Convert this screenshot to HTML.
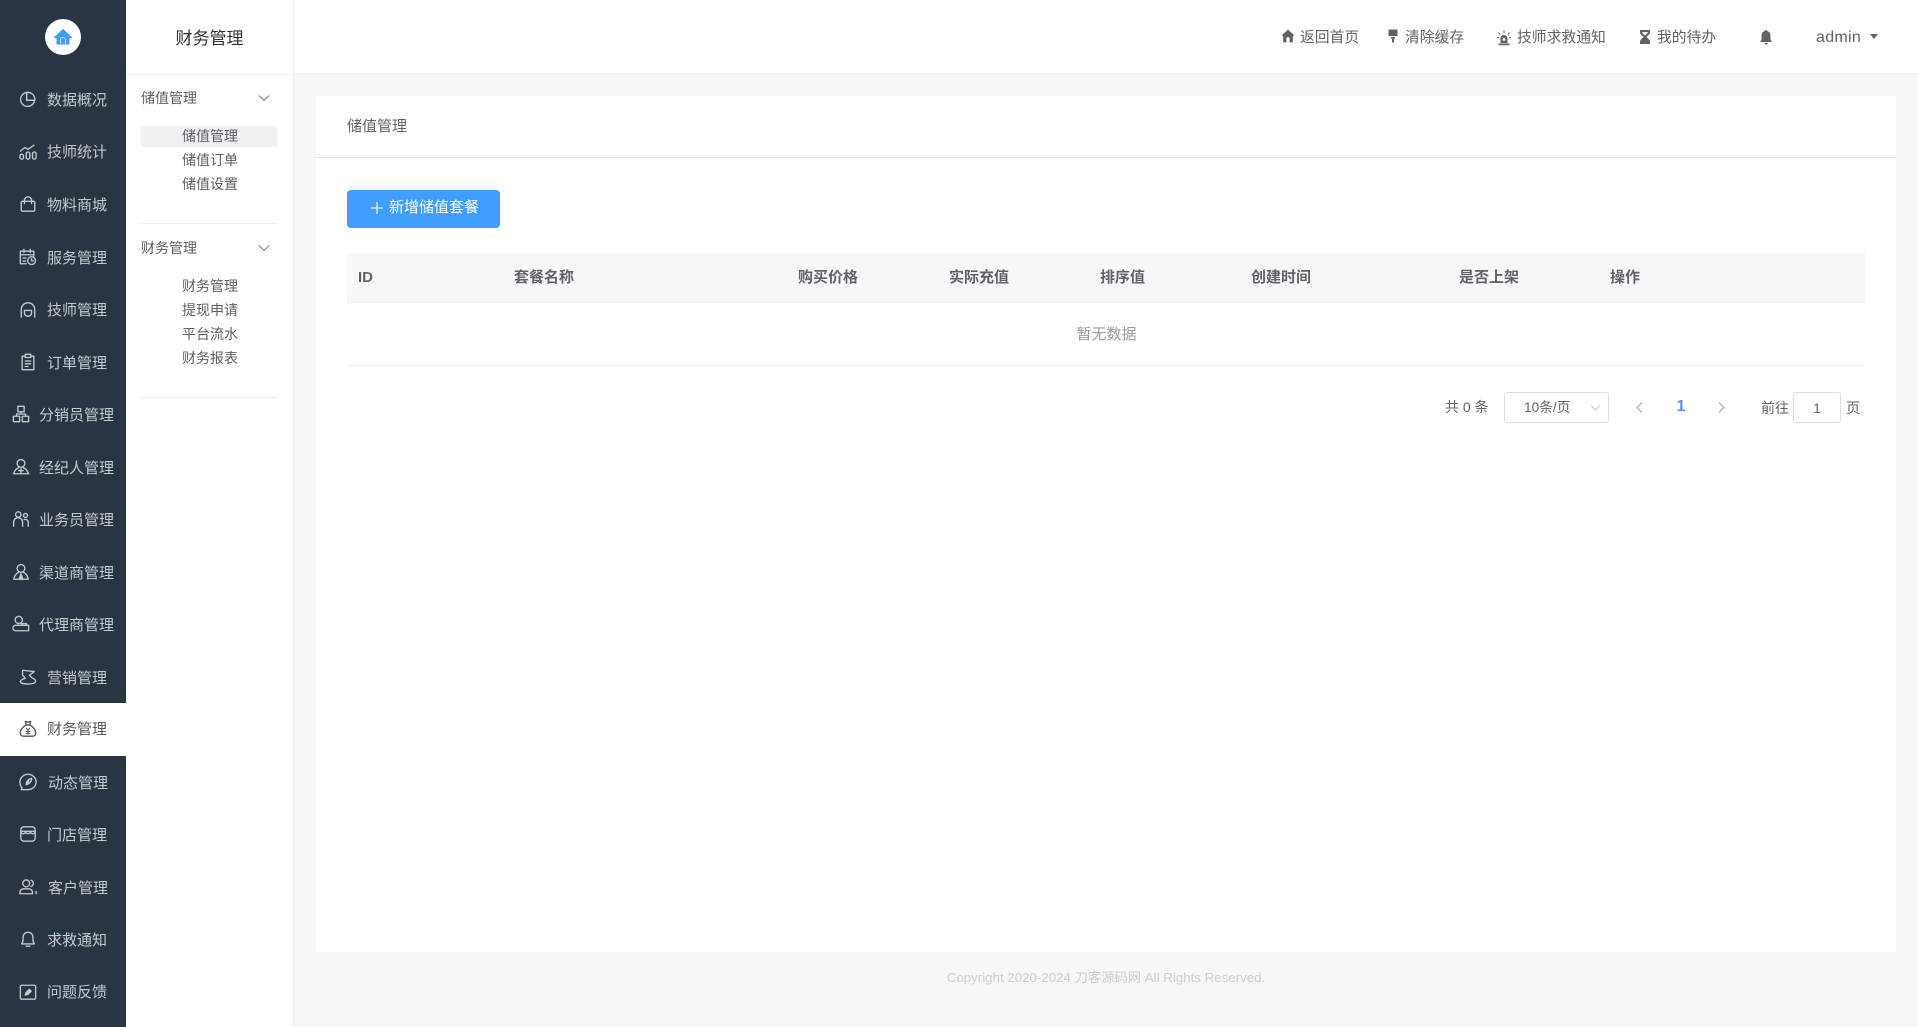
<!DOCTYPE html>
<html lang="zh-CN">
<head>
<meta charset="utf-8">
<title>储值管理</title>
<style>
*{box-sizing:border-box;margin:0;padding:0}
html,body{width:1918px;height:1027px;overflow:hidden;background:#f6f7f9;font-family:"Liberation Sans","Noto Sans CJK SC",sans-serif;color:#606266}
.a{position:absolute;white-space:nowrap}
.t{position:absolute;white-space:nowrap;line-height:20px;transform:translateY(-50%)}
.c{position:absolute;white-space:nowrap;line-height:20px;transform:translate(-50%,-50%)}
#side{position:absolute;left:0;top:0;width:126px;height:1027px;background:#2a3543}
#side .t{font-size:15px;color:#c4cad0;margin-top:1px}
#side svg{position:absolute;width:18px;height:18px;fill:none;stroke:#c4cad0;stroke-width:1.500;stroke-linecap:round;stroke-linejoin:round;transform:translate(-50%,-50%)}
#active{position:absolute;left:0;top:703px;width:126px;height:53px;background:#fff}
#sub{position:absolute;left:126px;top:0;width:168px;height:1027px;background:#fff;border-right:1px solid #eceef1}
#top{position:absolute;left:294px;top:0;width:1624px;height:74px;background:#fff;border-bottom:1px solid #f0f1f4}
.s{font-size:14px;color:#5a5e66}
.h{font-size:15px;color:#5f6368}
.th{font-size:15px;font-weight:700;color:#5f6368}
.p{font-size:14px;color:#606266}
.line{position:absolute;background:#ebedf0;height:1px}
#card{position:absolute;left:316px;top:96px;width:1580px;height:856px;background:#fff}
svg.ic{position:absolute;transform:translate(-50%,-50%);fill:#5f6368}
</style>
</head>
<body>
<div id="side">
  <div class="a" style="left:45px;top:19px;width:36px;height:36px;border-radius:50%;background:#fff"></div>
  <svg style="left:63px;top:37px;width:20px;height:20px" viewBox="0 0 20 20"><path d="M10 2.500 1.500 10.500H4V17h12v-6.500h2.500z" fill="#409eff" stroke="#409eff" stroke-width="1"/><path d="M7.500 16v-3a2.500 2.500 0 0 1 5 0v3" stroke="#cfe5ff" stroke-width="1"/></svg>
  <div id="active"></div>

  <svg style="left:28px;top:99px" viewBox="0 0 20 20"><path d="M8.500 2.700a7.800 7.800 0 1 0 8.800 8.800H8.500z"/><path d="M8.500 2.700V11.500h8.800a8.800 8.800 0 0 0 .3-1.700A8 8 0 0 0 8.500 2.700z"/></svg>
  <div class="t" style="left:47px;top:100px">数据概况</div>

  <svg style="left:28px;top:152px" viewBox="0 0 20 20"><rect x="1" y="12.500" width="4" height="5.500" rx="2"/><rect x="8" y="10" width="4" height="8" rx="2"/><rect x="15" y="10" width="4" height="8" rx="2"/><path d="M1.500 9 6.500 5l3.500 2L16.500 2.500"/></svg>
  <div class="t" style="left:47px;top:152px">技师统计</div>

  <svg style="left:28px;top:204px" viewBox="0 0 20 20"><rect x="2.500" y="7" width="15" height="11" rx="1.500"/><path d="M6 9.500V6a4 4 0 0 1 8 0v3.500"/></svg>
  <div class="t" style="left:47px;top:205px">物料商城</div>

  <svg style="left:28px;top:257px" viewBox="0 0 20 20"><path d="M8 17.500H1.500v-14h15V9M1.500 7.500h15M5.500 1.500v3.500M12.500 1.500v3.500M4.500 11h3M4.500 14.500h3"/><circle cx="14" cy="14" r="4.300"/><path d="M14 12v2.200h1.800"/></svg>
  <div class="t" style="left:47px;top:258px">服务管理</div>

  <svg style="left:28px;top:310px" viewBox="0 0 20 20"><path d="M2.500 18V9.500a7.500 7.500 0 0 1 15 0V18"/><path d="M6 10.500h8v2.500a4 4 0 0 1-8 0z"/></svg>
  <div class="t" style="left:47px;top:310px">技师管理</div>

  <svg style="left:28px;top:362px" viewBox="0 0 20 20"><path d="M7 3.500H3.500v15h13v-15H13"/><rect x="7" y="1.500" width="6" height="3.500"/><path d="M7 9h6M7 12h6M7 15h3"/></svg>
  <div class="t" style="left:47px;top:363px">订单管理</div>

  <svg style="left:21px;top:414px" viewBox="0 0 20 20"><rect x="6.500" y="1.500" width="7" height="6"/><rect x="1.500" y="12.500" width="7" height="6"/><rect x="11.500" y="12.500" width="7" height="6"/><path d="M10 7.500V10M5 12.500V10h10v2.500"/></svg>
  <div class="t" style="left:39px;top:415px">分销员管理</div>

  <svg style="left:21px;top:467px" viewBox="0 0 20 20"><circle cx="10" cy="6" r="4.300"/><path d="M7.500 10.500 4 13 1.500 17.500h17L16 13l-3.500-2.500"/><path d="M10 12v5.500M7.500 14h5"/></svg>
  <div class="t" style="left:39px;top:468px">经纪人管理</div>

  <svg style="left:21px;top:519px" viewBox="0 0 20 20"><circle cx="7" cy="5" r="3"/><circle cx="15" cy="6" r="2.200"/><path d="M1.800 18V13.500a5 5 0 0 1 10 0V18M13.500 10.500H15a3 3 0 0 1 3 3V18"/></svg>
  <div class="t" style="left:39px;top:520px">业务员管理</div>

  <svg style="left:21px;top:572px" viewBox="0 0 20 20"><circle cx="10" cy="6" r="4.300"/><path d="M7 10.500C4.500 12 2.500 14.500 2 18h16c-.5-3.500-2.500-6-5-7.500"/><path d="M10 12l-2 6h4z" fill="#c4cad0"/></svg>
  <div class="t" style="left:39px;top:573px">渠道商管理</div>

  <svg style="left:21px;top:624px" viewBox="0 0 20 20"><circle cx="7.500" cy="5.500" r="4"/><path d="M4 17.500a3 3 0 0 1 0-6h5M9 11.500h9.500V17.500H4M11 11.500V9.500h5v2"/></svg>
  <div class="t" style="left:39px;top:625px">代理商管理</div>

  <svg style="left:28px;top:677px" viewBox="0 0 20 20"><path d="M4 2.500 17 4 11.500 8l3 3c2 .8 4 2 4 3.800 0 2-4.500 3-8.500 3S1.500 17 1.500 15c0-1.500 3-3 5.500-3.500L4 8z"/></svg>
  <div class="t" style="left:47px;top:678px">营销管理</div>

  <svg style="left:28px;top:729px;stroke:#4f5358" viewBox="0 0 20 20"><path d="M7 1.500c2 .8 4 .8 6 0l-1 4H8z"/><path d="M8 5.500C4 8 1.500 11 1.500 14c0 2.500 1.500 4 3.500 4h10c2 0 3.500-1.500 3.500-4 0-3-2.500-6-6.500-8.500"/><path d="M8 9l2 2.500L12 9M10 11.500v4.500M7.800 12.800h4.400M7.800 14.800h4.400" stroke-width="1.100"/></svg>
  <div class="t" style="left:47px;top:729px;color:#55595e">财务管理</div>

  <svg style="left:28px;top:782px" viewBox="0 0 20 20"><path d="M3.500 16.500C2 15 1 13 1 10a9 8.500 0 1 1 9 8.500H2.500z"/><path d="M14 6c.2 3-1.800 6-6 7-.2-3 1.800-6 6-7zM8 13l3-4"/></svg>
  <div class="t" style="left:48px;top:783px">动态管理</div>

  <svg style="left:28px;top:834px" viewBox="0 0 20 20"><rect x="2" y="2" width="16" height="16" rx="3.500"/><path d="M2 7h16M2 7c0 3.500 5.300 3.500 5.300 0 0 3.500 5.400 3.500 5.400 0 0 3.500 5.300 3.500 5.300 0"/></svg>
  <div class="t" style="left:47px;top:835px">门店管理</div>

  <svg style="left:28px;top:887px" viewBox="0 0 20 20"><circle cx="8" cy="6" r="3.800"/><path d="M1 17.500V16a4 4 0 0 1 4-4h6a4 4 0 0 1 4 4v1.500zM13.500 2.500a3.800 3.800 0 0 1 0 7M19 15v2.500"/></svg>
  <div class="t" style="left:48px;top:888px">客户管理</div>

  <svg style="left:28px;top:939px" viewBox="0 0 20 20"><path d="M10 2.500a5.500 5.500 0 0 0-5.500 5.500v4l-1.500 3.500h14L15.500 12V8A5.500 5.500 0 0 0 10 2.500zM8 18h4"/></svg>
  <div class="t" style="left:47px;top:940px">求救通知</div>

  <svg style="left:28px;top:992px" viewBox="0 0 20 20"><rect x="1.500" y="2.500" width="17" height="15.500" rx="1.500"/><path d="M7 13.500l1-3 3.500-3.500 2 2-3.500 3.500z" fill="#c4cad0"/></svg>
  <div class="t" style="left:47px;top:992px">问题反馈</div>
</div>

<div id="sub">
  <div class="c" style="left:83.500px;top:38.500px;font-size:17px;color:#303133">财务管理</div>
  <div class="line" style="left:0;top:74px;width:167px;background:#f0f1f3"></div>

  <div class="t s" style="left:15px;top:98px">储值管理</div>
  <svg class="a" style="left:131px;top:94px" width="14" height="9" viewBox="0 0 14 9" fill="none" stroke="#777" stroke-width="1"><path d="M2 1.500l5 5 5-5"/></svg>
  <div class="a" style="left:15px;top:126px;width:137px;height:21px;border-radius:3px;background:#f0f0f2"></div>
  <div class="c s" style="left:84px;top:136px">储值管理</div>
  <div class="c s" style="left:84px;top:160px">储值订单</div>
  <div class="c s" style="left:84px;top:184px">储值设置</div>
  <div class="line" style="left:15px;top:223px;width:137px"></div>

  <div class="t s" style="left:15px;top:248px">财务管理</div>
  <svg class="a" style="left:131px;top:244px" width="14" height="9" viewBox="0 0 14 9" fill="none" stroke="#777" stroke-width="1"><path d="M2 1.500l5 5 5-5"/></svg>
  <div class="c s" style="left:84px;top:286px">财务管理</div>
  <div class="c s" style="left:84px;top:310px">提现申请</div>
  <div class="c s" style="left:84px;top:334px">平台流水</div>
  <div class="c s" style="left:84px;top:358px">财务报表</div>
  <div class="line" style="left:15px;top:397px;width:137px"></div>
</div>

<div id="top"></div>
<svg class="ic" style="left:1288px;top:36px" width="15" height="15" viewBox="0 0 14 14"><path d="M7 1 1 6.500 2.500 7V13H5.500V9.500a1.500 1.500 0 0 1 3 0V13h3V7L13 6.500z"/></svg>
<div class="t h" style="left:1300px;top:38px;font-size:14.800px">返回首页</div>
<svg class="ic" style="left:1393px;top:36px" width="12" height="15" viewBox="0 0 12 15"><path d="M1.500 1h9v6.500h-9zM4 8.500h4V10H7v4H5v-4H4z"/></svg>
<div class="t h" style="left:1405px;top:38px;font-size:14.800px">清除缓存</div>
<svg class="ic" style="left:1504px;top:38px" width="16" height="16" viewBox="0 0 16 16"><path d="M4.500 13V8.500a3.500 3.500 0 0 1 7 0V13z M2.500 13.500h11v1.800h-11z"/><circle cx="8" cy="9.500" r="1.400" fill="#fff"/><path d="M8 .5v2.500M2.500 2.500l1.700 2M13.500 2.500l-1.700 2M1 7.500h2M13 7.500h2" stroke="#5f6368" fill="none"/></svg>
<div class="t h" style="left:1517px;top:38px;font-size:14.800px">技师求救通知</div>
<svg class="ic" style="left:1645px;top:37px" width="12" height="16" viewBox="0 0 12 16"><path d="M1 1h10v2.500c0 2-2.500 3-3.500 4.500C8.500 9.500 11 10.500 11 12.500V15H1v-2.500C1 10.500 3.500 9.500 4.500 8 3.500 6.500 1 5.500 1 3.500z"/><path d="M3 3h6c-.5 1.500-2 2.300-3 3.500C5 5.300 3.500 4.500 3 3z" fill="#fff"/></svg>
<div class="t h" style="left:1657px;top:38px;font-size:14.800px">我的待办</div>
<svg class="ic" style="left:1766px;top:37px" width="15" height="17" viewBox="0 0 15 16"><path d="M7.500 1C7 1 6.500 1.300 6.500 2 4 2.500 3 4.500 3 7v3.500L1.500 13h12L12 10.500V7c0-2.500-1-4.500-3.500-5C8.500 1.300 8 1 7.500 1zM5.800 14h3.400c0 1-.8 1.500-1.700 1.500S5.800 15 5.800 14z"/></svg>
<div class="t" style="left:1816px;top:38px;font-size:16px;color:#5f6368;letter-spacing:.3px">admin</div>
<div class="a" style="left:1870px;top:34px;width:0;height:0;border-left:4.500px solid transparent;border-right:4.500px solid transparent;border-top:5px solid #5f6368"></div>

<div id="card"></div>
<div class="t" style="left:347px;top:127px;font-size:15px;color:#5f6368">储值管理</div>
<div class="line" style="left:316px;top:157px;width:1580px;background:#e4e5e9"></div>

<div class="a" style="left:347px;top:190px;width:153px;height:38px;border-radius:4px;background:#409eff"></div>
<svg class="a" style="left:370px;top:201px" width="14" height="14" viewBox="0 0 14 14" fill="none" stroke="#fff" stroke-width="1.100"><path d="M7 1v12M1 7h12"/></svg>
<div class="t" style="left:389px;top:208px;font-size:15px;color:#fff">新增储值套餐</div>

<div class="a" style="left:347px;top:253px;width:1518px;height:50px;background:#f6f7f9;border-bottom:1px solid #eef0f3"></div>
<div class="t th" style="left:358px;top:278px">ID</div>
<div class="t th" style="left:514px;top:278px">套餐名称</div>
<div class="t th" style="left:798px;top:278px">购买价格</div>
<div class="t th" style="left:949px;top:278px">实际充值</div>
<div class="t th" style="left:1100px;top:278px">排序值</div>
<div class="t th" style="left:1251px;top:278px">创建时间</div>
<div class="t th" style="left:1459px;top:278px">是否上架</div>
<div class="t th" style="left:1610px;top:278px">操作</div>

<div class="c" style="left:1106.500px;top:335px;font-size:15px;color:#999">暂无数据</div>
<div class="line" style="left:347px;top:365px;width:1518px;background:#eef0f3"></div>

<div class="t p" style="left:1445px;top:407px">共 0 条</div>
<div class="a" style="left:1504px;top:392px;width:105px;height:31px;border:1px solid #dcdfe6;border-radius:3px"></div>
<div class="t" style="left:1524px;top:408px;font-size:13.700px;color:#606266">10条/页</div>
<svg class="a" style="left:1590px;top:404px" width="11" height="8" viewBox="0 0 11 8" fill="none" stroke="#c0c4cc" stroke-width="1"><path d="M1 1.500l4.500 4.500 4.500-4.500"/></svg>
<svg class="a" style="left:1635px;top:401px" width="9" height="13" viewBox="0 0 9 13" fill="none" stroke="#b0b4bb" stroke-width="1.300"><path d="M7 1.500l-5 5 5 5"/></svg>
<div class="c" style="left:1681px;top:407px;font-size:16px;font-weight:700;color:#5b8fdc">1</div>
<svg class="a" style="left:1717px;top:401px" width="9" height="13" viewBox="0 0 9 13" fill="none" stroke="#b0b4bb" stroke-width="1.300"><path d="M2 1.500l5 5-5 5"/></svg>
<div class="t p" style="left:1761px;top:408px">前往</div>
<div class="a" style="left:1793px;top:392px;width:48px;height:31px;border:1px solid #dcdfe6;border-radius:3px"></div>
<div class="c p" style="left:1817px;top:408px">1</div>
<div class="t p" style="left:1846px;top:408px">页</div>

<div class="c" style="left:1106px;top:978px;font-size:13.300px;color:#cbcdd0">Copyright 2020-2024 刀客源码网 All Rights Reserved.</div>
</body>
</html>
